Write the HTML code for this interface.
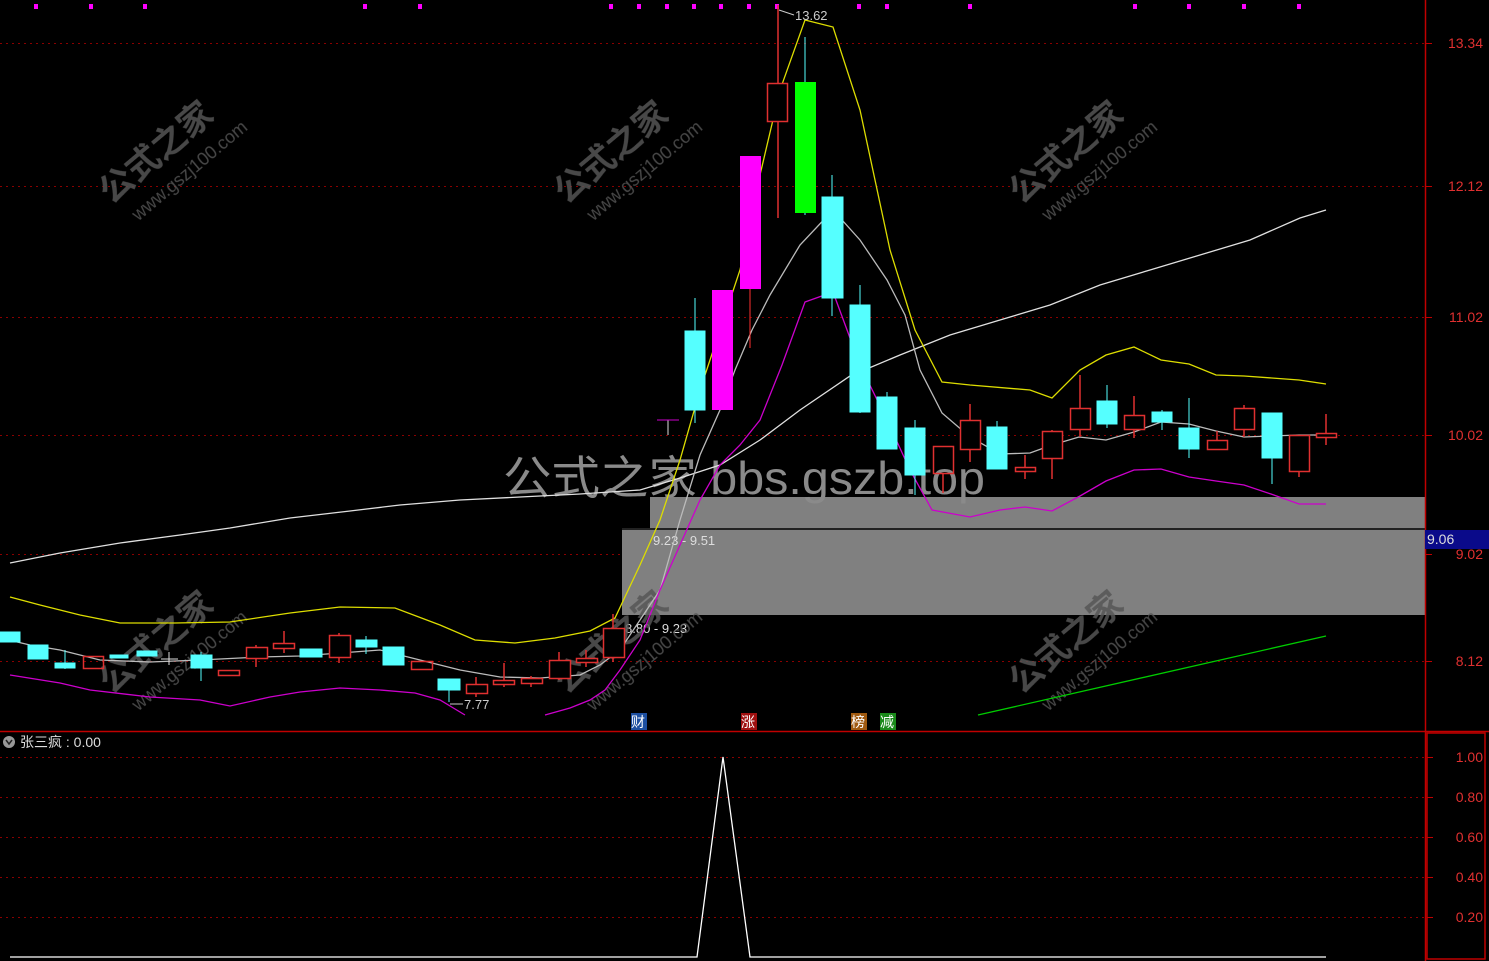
<!DOCTYPE html>
<html><head><meta charset="utf-8"><style>
html,body{margin:0;padding:0;background:#000;width:1489px;height:961px;overflow:hidden}
svg{display:block}
text{font-family:"Liberation Sans","Noto Sans CJK SC",sans-serif}
</style></head><body>
<svg width="1489" height="961" viewBox="0 0 1489 961" xmlns="http://www.w3.org/2000/svg">
<rect width="1489" height="961" fill="#000"/>
<g stroke="#8a0000" stroke-width="1" stroke-dasharray="2,4">
<line x1="0" y1="43.5" x2="1425" y2="43.5"/><line x1="0" y1="186.5" x2="1425" y2="186.5"/>
<line x1="0" y1="317.5" x2="1425" y2="317.5"/><line x1="0" y1="435.5" x2="1425" y2="435.5"/>
<line x1="0" y1="554.5" x2="1425" y2="554.5"/><line x1="0" y1="661.5" x2="1425" y2="661.5"/>
<line x1="0" y1="757.5" x2="1425" y2="757.5"/><line x1="0" y1="797.5" x2="1425" y2="797.5"/>
<line x1="0" y1="837.5" x2="1425" y2="837.5"/><line x1="0" y1="877.5" x2="1425" y2="877.5"/>
<line x1="0" y1="917.5" x2="1425" y2="917.5"/>
</g>
<g fill="#ff00ff">
<rect x="34" y="4" width="4" height="5"/><rect x="89" y="4" width="4" height="5"/><rect x="143" y="4" width="4" height="5"/>
<rect x="363" y="4" width="4" height="5"/><rect x="418" y="4" width="4" height="5"/><rect x="609" y="4" width="4" height="5"/>
<rect x="637" y="4" width="4" height="5"/><rect x="665" y="4" width="4" height="5"/><rect x="692" y="4" width="4" height="5"/>
<rect x="719" y="4" width="4" height="5"/><rect x="747" y="4" width="4" height="5"/><rect x="775" y="4" width="4" height="5"/>
<rect x="857" y="4" width="4" height="5"/><rect x="885" y="4" width="4" height="5"/><rect x="968" y="4" width="4" height="5"/>
<rect x="1133" y="4" width="4" height="5"/><rect x="1187" y="4" width="4" height="5"/><rect x="1242" y="4" width="4" height="5"/>
<rect x="1297" y="4" width="4" height="5"/>
</g>
<rect x="650" y="497" width="775" height="32" fill="#808080"/>
<rect x="622" y="529" width="803" height="86" fill="#808080"/>
<line x1="622" y1="529" x2="1425" y2="529" stroke="#222" stroke-width="2"/>
<text x="653" y="545" font-size="13" fill="#ddd">9.23 - 9.51</text>
<text x="625" y="633" font-size="13" fill="#ddd">8.80 - 9.23</text>
<text x="503" y="494" font-size="46" fill="#8a8a8a" textLength="482" lengthAdjust="spacingAndGlyphs">公式之家 bbs.gszb.top</text>
<g fill="#555" opacity="0.85">
<g transform="translate(165,160) rotate(-40)"><text x="-70" y="0" font-size="34" font-weight="bold">公式之家</text><text x="-60" y="30" font-size="18">www.gszj100.com</text></g>
<g transform="translate(620,160) rotate(-40)"><text x="-70" y="0" font-size="34" font-weight="bold">公式之家</text><text x="-60" y="30" font-size="18">www.gszj100.com</text></g>
<g transform="translate(1075,160) rotate(-40)"><text x="-70" y="0" font-size="34" font-weight="bold">公式之家</text><text x="-60" y="30" font-size="18">www.gszj100.com</text></g>
<g transform="translate(165,650) rotate(-40)"><text x="-70" y="0" font-size="34" font-weight="bold">公式之家</text><text x="-60" y="30" font-size="18">www.gszj100.com</text></g>
<g transform="translate(620,650) rotate(-40)"><text x="-70" y="0" font-size="34" font-weight="bold">公式之家</text><text x="-60" y="30" font-size="18">www.gszj100.com</text></g>
<g transform="translate(1075,650) rotate(-40)"><text x="-70" y="0" font-size="34" font-weight="bold">公式之家</text><text x="-60" y="30" font-size="18">www.gszj100.com</text></g>
</g>
<g fill="none" stroke-width="1.3">
<polyline stroke="#e0e0e0" points="10,563 60,553 120,543 180,535 230,528 290,518 350,511 400,505 460,500 520,497 580,494 640,490 680,478 720,465 760,440 800,410 850,376 900,355 950,335 1000,320 1050,305 1100,285 1150,270 1200,255 1250,240 1300,218 1326,210"/>
<polyline stroke="#dddd00" points="10,597 40,605 80,615 120,623 175,623 230,622 290,613 340,607 395,608 440,625 475,640 515,643 555,638 590,631 615,618 640,565 660,520 680,460 700,390 720,330 740,270 760,175 780,90 805,20 833,27 860,110 890,250 915,330 942,382 970,385 1030,390 1052,398 1080,370 1106,355 1134,347 1161,360 1189,364 1216,375 1244,376 1299,380 1326,384"/>
<polyline stroke="#bbbbbb" points="0,638 30,645 60,650 100,660 150,662 200,660 260,657 300,656 340,653 380,650 420,660 460,670 500,677 540,678 580,675 600,665 620,650 640,620 660,590 680,520 700,455 720,410 735,370 752,330 770,295 800,245 833,210 860,240 887,280 905,315 920,370 942,413 970,437 1000,454 1030,453 1052,445 1079,437 1106,440 1134,432 1161,422 1189,424 1216,431 1244,437 1271,436 1299,435 1326,435"/>
<polyline stroke="#cc00cc" points="10,675 60,683 90,690 150,697 200,700 230,706 270,697 300,692 340,688 380,690 415,693 440,700 465,715"/>
<polyline stroke="#cc00cc" points="545,715 570,708 590,700 605,690 620,670 640,640 660,590 680,545 700,500 720,465 740,445 760,420 782,365 805,302 833,292 860,365 887,420 910,470 932,510 970,517 1000,510 1025,507 1052,511 1080,496 1106,481 1134,470 1161,469 1189,477 1216,481 1244,485 1271,494 1299,504 1326,504"/>
<polyline stroke="#00cc00" points="978,715 1326,636"/>
</g>
<g fill="#55ffff" stroke="#55ffff">
<line x1="695" y1="298" x2="695" y2="423"/><rect x="685" y="331" width="20" height="79"/>
<line x1="832" y1="175" x2="832" y2="316"/><rect x="822" y="197" width="21" height="101"/>
<line x1="860" y1="285" x2="860" y2="413"/><rect x="850" y="305" width="20" height="107"/>
<line x1="887" y1="392" x2="887" y2="449"/><rect x="877" y="397" width="20" height="52"/>
<line x1="915" y1="420" x2="915" y2="495"/><rect x="905" y="428" width="20" height="47"/>
<line x1="997" y1="421" x2="997" y2="469"/><rect x="987" y="427" width="20" height="42"/>
<line x1="1107" y1="385" x2="1107" y2="428"/><rect x="1097" y="401" width="20" height="23"/>
<line x1="1162" y1="410" x2="1162" y2="430"/><rect x="1152" y="412" width="20" height="10"/>
<line x1="1189" y1="398" x2="1189" y2="458"/><rect x="1179" y="428" width="20" height="21"/>
<line x1="1272" y1="413" x2="1272" y2="484"/><rect x="1262" y="413" width="20" height="45"/>
<rect x="0" y="632" width="20" height="10"/>
<rect x="28" y="645" width="20" height="14"/>
<line x1="65" y1="650" x2="65" y2="669"/><rect x="55" y="663" width="20" height="5"/>
<rect x="110" y="655" width="18" height="3"/>
<rect x="137" y="651" width="20" height="5"/>
<line x1="201" y1="652" x2="201" y2="681"/><rect x="191" y="655" width="21" height="13"/>
<rect x="300" y="649" width="22" height="8"/>
<line x1="366" y1="636" x2="366" y2="654"/><rect x="356" y="640" width="21" height="7"/>
<rect x="383" y="647" width="21" height="18"/>
<line x1="449" y1="679" x2="449" y2="702"/><rect x="438" y="679" width="22" height="11"/>
</g>
<rect x="712" y="290" width="21" height="120" fill="#ff00ff"/>
<line x1="750" y1="280" x2="750" y2="348" stroke="#ff3030"/>
<rect x="740" y="156" width="21" height="133" fill="#ff00ff"/>
<line x1="805" y1="37" x2="805" y2="215" stroke="#55ffff"/>
<rect x="795" y="82" width="21" height="131" fill="#00ff00"/>
<line x1="668" y1="420" x2="668" y2="435" stroke="#ddd"/><line x1="657" y1="420" x2="679" y2="420" stroke="#cc00cc"/>
<g fill="none" stroke="#e03030" stroke-width="1.5">
<line x1="778" y1="5" x2="778" y2="218"/><rect x="767.5" y="83.5" width="20" height="38" fill="#000"/>
<line x1="943" y1="473" x2="943" y2="493"/><rect x="933.5" y="446.5" width="20" height="27"/>
<line x1="970" y1="404" x2="970" y2="462"/><rect x="960.5" y="420.5" width="20" height="29" fill="#000"/>
<line x1="1025" y1="455" x2="1025" y2="479"/><rect x="1015.5" y="467.5" width="20" height="4" fill="#000"/>
<line x1="1052" y1="430" x2="1052" y2="479"/><rect x="1042.5" y="431.5" width="20" height="27" fill="#000"/>
<line x1="1080" y1="375" x2="1080" y2="437"/><rect x="1070.5" y="408.5" width="20" height="21" fill="#000"/>
<line x1="1134" y1="396" x2="1134" y2="438"/><rect x="1124.5" y="415.5" width="20" height="14" fill="#000"/>
<rect x="1207.5" y="440.5" width="20" height="9"/><line x1="1217" y1="431" x2="1217" y2="440"/>
<line x1="1244" y1="405" x2="1244" y2="437"/><rect x="1234.5" y="408.5" width="20" height="21" fill="#000"/>
<line x1="1299" y1="471" x2="1299" y2="477"/><rect x="1289.5" y="435.5" width="20" height="36"/>
<line x1="1326" y1="414" x2="1326" y2="445"/><rect x="1316.5" y="433.5" width="20" height="4" fill="#000"/>
<rect x="83.5" y="656.5" width="20" height="12"/>
<rect x="218.5" y="670.5" width="21" height="5"/>
<line x1="256" y1="645" x2="256" y2="667"/><rect x="246.5" y="647.5" width="21" height="11" fill="#000"/>
<line x1="284" y1="631" x2="284" y2="653"/><rect x="273.5" y="643.5" width="21" height="5" fill="#000"/>
<line x1="339" y1="633" x2="339" y2="663"/><rect x="329.5" y="635.5" width="21" height="22" fill="#000"/>
<rect x="411.5" y="661.5" width="21" height="8"/>
<line x1="476" y1="677" x2="476" y2="697"/><rect x="466.5" y="684.5" width="21" height="9" fill="#000"/>
<line x1="504" y1="663" x2="504" y2="687"/><rect x="493.5" y="680.5" width="21" height="4" fill="#000"/>
<line x1="531" y1="676" x2="531" y2="687"/><rect x="521.5" y="678.5" width="21" height="5" fill="#000"/>
<line x1="559" y1="652" x2="559" y2="680"/><rect x="549.5" y="660.5" width="21" height="18" fill="#000"/>
<line x1="586" y1="650" x2="586" y2="667"/><rect x="576.5" y="658.5" width="21" height="4" fill="#000"/>
<line x1="613" y1="614" x2="613" y2="662"/><rect x="603.5" y="628.5" width="21" height="29" fill="#000"/>
</g>
<line x1="169" y1="652" x2="169" y2="665" stroke="#ddd"/><line x1="161" y1="659" x2="178" y2="659" stroke="#ddd"/>
<text x="795" y="20" font-size="13" fill="#ccc">13.62</text>
<line x1="779" y1="10" x2="794" y2="15" stroke="#ccc"/>
<text x="464" y="709" font-size="13" fill="#ccc">7.77</text>
<line x1="450" y1="704" x2="463" y2="704" stroke="#ccc"/>
<rect x="631" y="713" width="16" height="17" fill="#1d4fa0"/><text x="631" y="727" font-size="14" fill="#fff">财</text>
<rect x="741" y="713" width="16" height="17" fill="#a01010"/><text x="741" y="727" font-size="14" fill="#fff">涨</text>
<rect x="851" y="713" width="16" height="17" fill="#a05a10"/><text x="851" y="727" font-size="14" fill="#fff">榜</text>
<rect x="880" y="713" width="16" height="17" fill="#1a8a1a"/><text x="880" y="727" font-size="14" fill="#fff">减</text>
<line x1="0" y1="731.5" x2="1489" y2="731.5" stroke="#c00000" stroke-width="1.5"/>
<line x1="1425.5" y1="0" x2="1425.5" y2="961" stroke="#c00000" stroke-width="1.5"/>
<rect x="1427" y="733" width="58" height="226" fill="none" stroke="#c00000" stroke-width="1.5"/>
<g font-size="14" fill="#e03030" text-anchor="end">
<text x="1483" y="48">13.34</text><text x="1483" y="191">12.12</text><text x="1483" y="322">11.02</text>
<text x="1483" y="440">10.02</text><text x="1483" y="559">9.02</text><text x="1483" y="666">8.12</text>
<text x="1483" y="762">1.00</text><text x="1483" y="802">0.80</text><text x="1483" y="842">0.60</text>
<text x="1483" y="882">0.40</text><text x="1483" y="922">0.20</text>
</g>
<g stroke="#c00000"><line x1="1426" y1="43.5" x2="1432" y2="43.5"/><line x1="1426" y1="186.5" x2="1432" y2="186.5"/><line x1="1426" y1="317.5" x2="1432" y2="317.5"/><line x1="1426" y1="435.5" x2="1432" y2="435.5"/><line x1="1426" y1="554.5" x2="1432" y2="554.5"/><line x1="1426" y1="661.5" x2="1432" y2="661.5"/>
<line x1="1427" y1="757.5" x2="1433" y2="757.5"/><line x1="1427" y1="797.5" x2="1433" y2="797.5"/><line x1="1427" y1="837.5" x2="1433" y2="837.5"/><line x1="1427" y1="877.5" x2="1433" y2="877.5"/><line x1="1427" y1="917.5" x2="1433" y2="917.5"/></g>
<rect x="1425" y="530" width="64" height="19" fill="#0a0a8a"/>
<text x="1427" y="544" font-size="14" fill="#ddd">9.06</text>
<circle cx="9" cy="742" r="6" fill="#999"/><path d="M6 740 L9 744 L12 740" stroke="#222" stroke-width="1.5" fill="none"/>
<text x="20" y="747" font-size="14" fill="#ddd">张三疯 : 0.00</text>
<polyline fill="none" stroke="#fff" stroke-width="1.3" points="10,957 697,957 723,757 750,957 1326,957"/>
</svg>
</body></html>
